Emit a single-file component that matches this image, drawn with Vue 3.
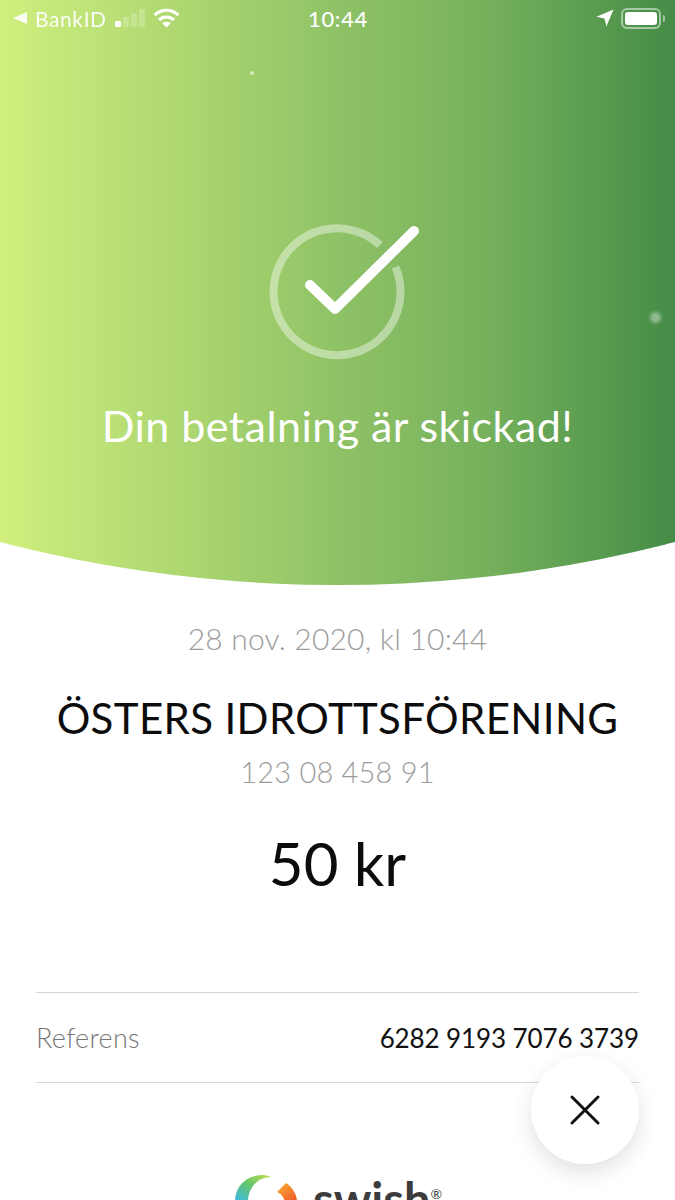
<script setup>
const date = "28 nov. 2020, kl 10:44";
const payee = "ÖSTERS IDROTTSFÖRENING";
const number = "123 08 458 91";
const amount = "50 kr";
const reference = "6282 9193 7076 3739";
</script>

<template>
  <div class="screen">
    <section class="hero">
      <div class="status">
        <div class="status-left">
          <svg class="back" width="14" height="14" viewBox="0 0 13 13"><path d="M13 1v11L0 6.500z" fill="#fff" opacity=".92" /></svg>
          <span class="bank">BankID</span>
          <div class="signal">
            <i class="on"></i><i></i><i></i><i></i>
          </div>
          <svg class="wifi" width="27" height="20" viewBox="0 0 27 20" fill="none" stroke="#fff" stroke-width="3.2">
            <path d="M1.600 7.200C8.400 .6 18.600 .6 25.400 7.200" />
            <path d="M6 12c4.200-4 10.800-4 15 0" />
            <path d="M13.500 19.500l-4.200-4.300c2.400-2 6-2 8.400 0z" fill="#fff" stroke="none" />
          </svg>
        </div>
        <span class="clock">10:44</span>
        <div class="status-right">
          <svg width="18" height="18" viewBox="0 0 17 17"><path d="M16.500 .5L9.800 16.500 8 9 .5 7.300z" fill="#fff" /></svg>
          <div class="battery"><div class="battery-fill"></div></div>
          <div class="battery-cap"></div>
        </div>
      </div>

      <span class="spark spark-a"></span>
      <span class="spark spark-b"></span>

      <svg class="check" width="150" height="140" viewBox="0 0 150 140" fill="none">
        <path d="M110 20A63.500 63.500 0 1 0 125.500 42" stroke="#fff" stroke-opacity=".42" stroke-width="8" />
        <path d="M40 60L65 84 144 6" stroke="#fff" stroke-width="10" stroke-linecap="round" stroke-linejoin="round" />
      </svg>
      <h1 class="sent">Din betalning är skickad!</h1>
    </section>

    <main class="details">
      <div class="date">{{ date }}</div>
      <div class="payee">{{ payee }}</div>
      <div class="number">{{ number }}</div>
      <div class="amount">{{ amount }}</div>
      <div class="ref-row">
        <span class="ref-label">Referens</span>
        <span class="ref-value">{{ reference }}</span>
      </div>
    </main>

    <button class="close" aria-label="Stäng">
      <svg width="32" height="32" viewBox="0 0 32 32" stroke="#111" stroke-width="3" stroke-linecap="round"><path d="M3 3l26 26M29 3L3 29" /></svg>
    </button>

    <footer class="logo">
      <svg width="66" height="26" viewBox="0 0 66 26" fill="none">
        <defs>
          <linearGradient id="arc" x1="0" y1="1" x2="1" y2="0">
            <stop offset="0" stop-color="#3fb8e0" />
            <stop offset=".5" stop-color="#62c66c" />
            <stop offset="1" stop-color="#c4dd50" />
          </linearGradient>
          <linearGradient id="arrow" x1="0" y1="0" x2="1" y2="1">
            <stop offset="0" stop-color="#f9b233" />
            <stop offset="1" stop-color="#f0592b" />
          </linearGradient>
        </defs>
        <path d="M0 26C1 11 12 1 28 1c3 0 6 1 8 2C24 3 14 12 13 26z" fill="url(#arc)" />
        <path d="M42 18l9-9c6 4 10 10 11 17H49c0-3-3-6-7-8z" fill="url(#arrow)" />
      </svg>
      <span class="logo-text">swish</span>
      <span class="logo-reg">®</span>
    </footer>
  </div>
</template>

<style>
html,
body {
  margin: 0;
  background: #fff;
}
</style>

<style scoped>
.screen {
  position: relative;
  width: 675px;
  height: 1200px;
  overflow: hidden;
  background: #fff;
  font-family: Lato, "Open Sans", sans-serif;
}

.hero {
  position: relative;
  height: 585px;
  box-sizing: border-box;
  display: flex;
  flex-direction: column;
  align-items: center;
  background: linear-gradient(90deg, #d0ef7e 0%, #a9d46f 30%, #8fc266 50%, #76b15c 72%, #458c47 100%);
  clip-path: circle(1346px at 50% -761px);
}

.status {
  align-self: stretch;
  height: 36px;
  display: flex;
  align-items: center;
  justify-content: space-between;
  padding: 0 10px 0 13px;
  color: #fff;
  font-size: 21px;
}

.status-left,
.status-right {
  width: 200px;
  display: flex;
  align-items: center;
}

.status-right {
  justify-content: flex-end;
}

.bank {
  margin-left: 8px;
  letter-spacing: 0.6px;
  opacity: 0.92;
}

.signal {
  display: flex;
  align-items: flex-end;
  gap: 2px;
  margin-left: 8px;
  height: 18px;
}

.signal i {
  width: 6px;
  background: rgba(255, 255, 255, 0.22);
  border-radius: 1px;
}

.signal i:nth-child(1) {
  height: 6px;
  background: #fff;
}
.signal i:nth-child(2) {
  height: 10px;
}
.signal i:nth-child(3) {
  height: 14px;
}
.signal i:nth-child(4) {
  height: 18px;
}

.wifi {
  margin-left: 8px;
}

.clock {
  font-size: 22px;
  font-weight: 500;
  letter-spacing: 0.7px;
  margin-right: 2px;
}

.battery {
  width: 40px;
  height: 21px;
  margin-left: 7px;
  box-sizing: border-box;
  border: 2px solid rgba(255, 255, 255, 0.5);
  border-radius: 6px;
  padding: 2px;
}

.battery-fill {
  height: 100%;
  background: #fff;
  border-radius: 3px;
}

.battery-cap {
  width: 2px;
  height: 7px;
  margin-left: 2px;
  background: rgba(255, 255, 255, 0.5);
  border-radius: 0 2px 2px 0;
}

.spark {
  position: absolute;
  border-radius: 50%;
  background: #fff;
}

.spark-a {
  left: 250px;
  top: 71px;
  width: 4px;
  height: 4px;
  opacity: 0.55;
}

.spark-b {
  left: 650px;
  top: 312px;
  width: 11px;
  height: 11px;
  opacity: 0.38;
  filter: blur(1.5px);
}

.check {
  margin-top: 189px;
  margin-left: 15px;
  overflow: visible;
}

.sent {
  margin: 37px 0 0;
  color: #fff;
  font-size: 43px;
  line-height: 48px;
  font-weight: 400;
  letter-spacing: 0.45px;
  white-space: nowrap;
}

.details {
  padding: 0 36px;
  text-align: center;
}

.date {
  margin-top: 35px;
  font-size: 30px;
  line-height: 36px;
  font-weight: 300;
  letter-spacing: 0.2px;
  color: #9c9c9c;
}

.payee {
  margin-top: 38px;
  font-size: 42px;
  line-height: 48px;
  font-weight: 400;
  letter-spacing: 0.36px;
  color: #0c0c0c;
  white-space: nowrap;
}

.number {
  margin-top: 12px;
  font-size: 29px;
  line-height: 36px;
  font-weight: 300;
  letter-spacing: 0.2px;
  color: #9c9c9c;
}

.amount {
  margin-top: 35px;
  font-size: 60px;
  line-height: 76px;
  font-weight: 400;
  color: #0c0c0c;
}

.ref-row {
  margin-top: 91px;
  height: 89px;
  display: flex;
  align-items: center;
  justify-content: space-between;
  border-top: 1px solid #d6d6d6;
  border-bottom: 1px solid #d6d6d6;
}

.ref-label {
  font-size: 27px;
  font-weight: 300;
  letter-spacing: 0.3px;
  color: #777;
}

.ref-value {
  font-size: 26px;
  letter-spacing: -0.1px;
  color: #111;
}

.close {
  position: absolute;
  left: 531px;
  top: 1056px;
  width: 108px;
  height: 108px;
  padding: 0;
  border: 0;
  border-radius: 50%;
  background: #fff;
  display: flex;
  align-items: center;
  justify-content: center;
  box-shadow: 0 8px 22px rgba(0, 0, 0, 0.12);
}

.logo {
  position: absolute;
  left: 235px;
  top: 1174px;
  display: flex;
  align-items: flex-start;
  color: #3c3c3c;
}

.logo-text {
  margin-left: 12px;
  font-size: 47px;
  line-height: 50px;
  font-weight: 700;
}

.logo-reg {
  font-size: 14px;
  line-height: 14px;
  margin-top: 13px;
}
</style>
